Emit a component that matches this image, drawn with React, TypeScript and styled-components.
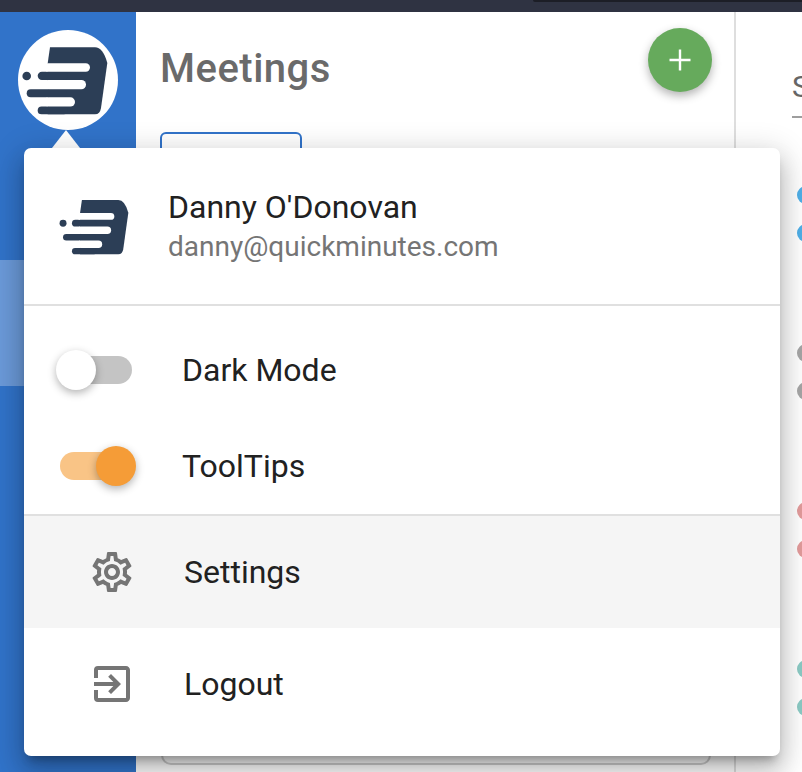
import React from "react";
import styled, { createGlobalStyle } from "styled-components";
import { MdOutlineSettings, MdExitToApp } from "react-icons/md";

const Global = createGlobalStyle`
  html, body { margin: 0; padding: 0; background: #fff; }
  body { font-family: Roboto, "Liberation Sans", sans-serif; overflow: hidden; }
`;

const Page = styled.div`
  position: relative;
  width: 802px;
  height: 772px;
  overflow: hidden;
  display: flex;
  flex-direction: column;
`;

const TopBar = styled.div`
  height: 12px;
  flex: none;
  background: #2f3342;
`;

const TopBarEdge = styled.div`
  height: 2px;
  margin-left: 533px;
  background: #1c1e26;
  border-bottom-left-radius: 3px;
`;

const Body = styled.div`
  flex: 1;
  display: flex;
  min-height: 0;
`;

const Sidebar = styled.aside`
  width: 136px;
  flex: none;
  background: #3173c9;
  display: flex;
  flex-direction: column;
`;

const AvatarButton = styled.div`
  width: 100px;
  height: 100px;
  margin: 18px 0 0 18px;
  flex: none;
  border-radius: 50%;
  background: #fff;
`;

const ActiveNav = styled.div`
  height: 126px;
  margin-top: 130px;
  flex: none;
  background: #6b9ad9;
`;

const MeetingsPanel = styled.section`
  width: 600px;
  flex: none;
  box-sizing: border-box;
  padding: 16px 22px 0 24px;
  border-right: 2px solid #dedede;
  display: flex;
  flex-direction: column;
`;

const PanelHead = styled.div`
  display: flex;
  justify-content: space-between;
  align-items: flex-start;
`;

const PanelTitle = styled.h1`
  margin: 19px 0 0;
  font-size: 40px;
  line-height: 44px;
  letter-spacing: 0.5px;
  font-weight: 500;
  color: #6a6a6a;
`;

const Fab = styled.div`
  width: 64px;
  height: 64px;
  border-radius: 50%;
  background: #66aa5c;
  box-shadow: 0 4px 10px rgba(0, 0, 0, 0.3);
  display: flex;
  align-items: center;
  justify-content: center;
`;

const FilterButton = styled.div`
  width: 142px;
  height: 60px;
  margin-top: 40px;
  box-sizing: border-box;
  border: 2px solid #3173c9;
  border-radius: 6px;
`;

const BottomCard = styled.div`
  margin: auto 1px 7px 1px;
  height: 40px;
  box-sizing: border-box;
  border: 2px solid #cfcfcf;
  border-radius: 10px;
`;

const Detail = styled.section`
  flex: 1;
  min-width: 0;
  padding: 60px 0 0 56px;
`;

const DetailTitle = styled.div`
  font-size: 30px;
  line-height: 30px;
  color: #666;
  height: 46px;
  border-bottom: 2px solid #9e9e9e;
  box-sizing: border-box;
`;

const DotList = styled.div`
  padding: 68px 0 0 5px;
  display: flex;
  flex-direction: column;
  gap: 102px;
`;

const DotGroup = styled.div`
  display: flex;
  flex-direction: column;
  gap: 20px;
`;

const Dot = styled.span<{ $color: string }>`
  display: block;
  width: 18px;
  height: 18px;
  border-radius: 50%;
  background: ${(p) => p.$color};
`;

const Arrow = styled.div`
  position: absolute;
  left: 52px;
  top: 130px;
  width: 0;
  height: 0;
  border-left: 14px solid transparent;
  border-right: 14px solid transparent;
  border-bottom: 18px solid #fff;
`;

const Popover = styled.div`
  position: absolute;
  left: 24px;
  top: 148px;
  width: 756px;
  height: 608px;
  background: #fff;
  border-radius: 7px;
  box-shadow: 0 8px 10px -5px rgba(0, 0, 0, 0.3), 0 16px 24px 2px rgba(0, 0, 0, 0.16),
    0 6px 30px 5px rgba(0, 0, 0, 0.14);
  display: flex;
  flex-direction: column;
  overflow: hidden;
`;

const UserHead = styled.div`
  height: 158px;
  flex: none;
  box-sizing: border-box;
  border-bottom: 2px solid #e0e0e0;
  display: flex;
  align-items: center;
  padding-left: 32px;
`;

const UserText = styled.div`
  margin: 2px 0 0 31px;
`;

const UserName = styled.div`
  font-size: 32px;
  line-height: 40px;
  color: #212121;
`;

const UserMail = styled.div`
  font-size: 28px;
  line-height: 40px;
  color: #757575;
`;

const Toggles = styled.div`
  height: 210px;
  flex: none;
  box-sizing: border-box;
  border-bottom: 2px solid #e0e0e0;
  padding-top: 16px;
  display: flex;
  flex-direction: column;
`;

const ToggleRow = styled.div`
  height: 96px;
  display: flex;
  align-items: center;
  padding-left: 36px;
`;

const Track = styled.div<{ $on: boolean }>`
  position: relative;
  width: 72px;
  height: 28px;
  border-radius: 14px;
  background: ${(p) => (p.$on ? "#f9c486" : "#c4c4c4")};
`;

const Thumb = styled.div<{ $on: boolean }>`
  position: absolute;
  top: -6px;
  left: ${(p) => (p.$on ? "36px" : "-4px")};
  width: 40px;
  height: 40px;
  border-radius: 50%;
  background: ${(p) => (p.$on ? "#f59c37" : "#fff")};
  box-shadow: 0 3px 8px rgba(0, 0, 0, 0.3);
`;

const RowLabel = styled.span`
  margin-left: 50px;
  font-size: 32px;
  color: #212121;
`;

const MenuItem = styled.div<{ $active?: boolean }>`
  height: 112px;
  flex: none;
  display: flex;
  align-items: center;
  padding-left: 64px;
  background: ${(p) => (p.$active ? "#f5f5f5" : "#fff")};
  color: #757575;
  font-size: 48px;
`;

const MenuLabel = styled.span`
  margin-left: 48px;
  font-size: 32px;
  color: #212121;
`;

const Logo = ({ size }: { size: number }) => (
  <svg width={size} height={size} viewBox="0 0 100 100" style={{ display: "block", flex: "none" }}>
    <path
      d="M29.7 33.3 L32 17.3 H77 Q85 17.3 89.3 33 L83 78 Q82 84.3 77 84.3 H29.7 Z"
      fill="#2c3e56"
    />
    <rect x="19.7" y="41.7" width="30" height="8.3" rx="4.15" fill="#2c3e56" />
    <rect x="8.7" y="59.3" width="40" height="8" rx="4" fill="#2c3e56" />
    <rect x="19.7" y="76.6" width="30" height="7.7" rx="3.85" fill="#2c3e56" />
    <circle cx="8.7" cy="46" r="4.3" fill="#2c3e56" />
    <rect x="26" y="33.3" width="46" height="8.4" rx="4.2" fill="#fff" />
    <rect x="26" y="50" width="42" height="9.3" rx="4.6" fill="#fff" />
    <rect x="26" y="67.3" width="31" height="9.3" rx="4.6" fill="#fff" />
  </svg>
);

export default function App() {
  return (
    <Page>
      <Global />
      <TopBar>
        <TopBarEdge />
      </TopBar>
      <Body>
        <Sidebar>
          <AvatarButton>
            <Logo size={100} />
          </AvatarButton>
          <ActiveNav />
        </Sidebar>
        <MeetingsPanel>
          <PanelHead>
            <PanelTitle>Meetings</PanelTitle>
            <Fab>
              <svg width="24" height="24" viewBox="0 0 24 24" fill="none" stroke="#fff" strokeWidth="2.4">
                <path d="M12 1.5v21M1.5 12h21" />
              </svg>
            </Fab>
          </PanelHead>
          <FilterButton />
          <BottomCard />
        </MeetingsPanel>
        <Detail>
          <DetailTitle>S</DetailTitle>
          <DotList>
            <DotGroup><Dot $color="#4fb0e8" /><Dot $color="#4fb0e8" /></DotGroup>
            <DotGroup><Dot $color="#a6a6a6" /><Dot $color="#a6a6a6" /></DotGroup>
            <DotGroup><Dot $color="#e39c9c" /><Dot $color="#e39c9c" /></DotGroup>
            <DotGroup><Dot $color="#8ccbc5" /><Dot $color="#8ccbc5" /></DotGroup>
          </DotList>
        </Detail>
      </Body>
      <Arrow />
      <Popover>
        <UserHead>
          <Logo size={81} />
          <UserText>
            <UserName>Danny O'Donovan</UserName>
            <UserMail>danny@quickminutes.com</UserMail>
          </UserText>
        </UserHead>
        <Toggles>
          <ToggleRow>
            <Track $on={false}><Thumb $on={false} /></Track>
            <RowLabel>Dark Mode</RowLabel>
          </ToggleRow>
          <ToggleRow>
            <Track $on={true}><Thumb $on={true} /></Track>
            <RowLabel>ToolTips</RowLabel>
          </ToggleRow>
        </Toggles>
        <MenuItem $active>
          <MdOutlineSettings />
          <MenuLabel>Settings</MenuLabel>
        </MenuItem>
        <MenuItem>
          <MdExitToApp />
          <MenuLabel>Logout</MenuLabel>
        </MenuItem>
      </Popover>
    </Page>
  );
}
